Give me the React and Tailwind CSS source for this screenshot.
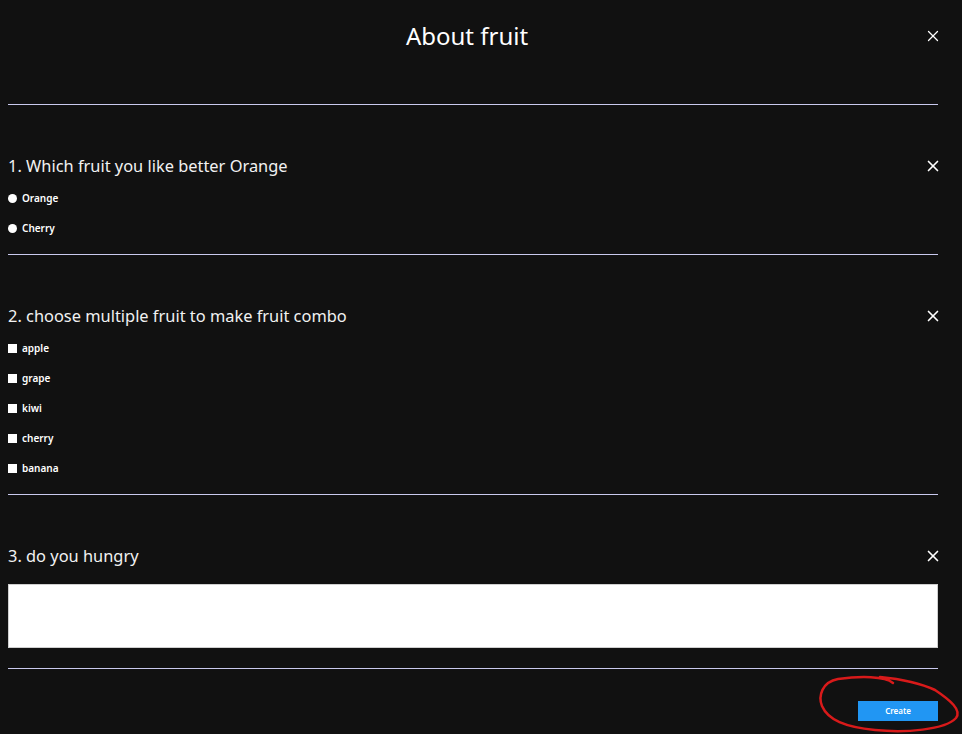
import React, { useState } from 'react';
import { X } from 'lucide-react';

const questions = [
  {
    id: 1,
    title: '1. Which fruit you like better Orange',
    type: 'radio',
    options: ['Orange', 'Cherry'],
  },
  {
    id: 2,
    title: '2. choose multiple fruit to make fruit combo',
    type: 'checkbox',
    options: ['apple', 'grape', 'kiwi', 'cherry', 'banana'],
  },
  {
    id: 3,
    title: '3. do you hungry',
    type: 'text',
  },
];

const Question = ({ question }) => {
  const [answer, setAnswer] = useState('');

  return (
    <div className="pt-[49px] pb-[20px] border-b border-[#c9c9ee]">
      {/* Question Header */}
      <div className="flex items-center justify-between h-6">
        <h3 className="text-[16.4px] text-[#f2f2f2] leading-6">{question.title}</h3>
        <button className="mr-[-4px] text-white">
          <X size={18} strokeWidth={2.2} />
        </button>
      </div>

      {question.type === 'text' ? (
        <input
          type="text"
          value={answer}
          onChange={(e) => setAnswer(e.target.value)}
          className="mt-4 w-full h-16 bg-white border border-[#cfcfcf] outline-none px-2 text-black"
        />
      ) : (
        <div className="mt-[5px] mb-[-9px]">
          {question.options.map((option) => (
            <label key={option} className="flex items-center h-[30px] text-[10px] font-semibold text-white">
              {question.type === 'radio' ? (
                <span className="w-[9px] h-[9px] rounded-full bg-white mr-[5px]" />
              ) : (
                <span className="w-[9px] h-[9px] bg-white mr-[5px]" />
              )}
              {option}
            </label>
          ))}
        </div>
      )}
    </div>
  );
};

const App = () => {
  return (
    <div
      className="relative min-h-screen bg-[#111111] pl-2 pr-6"
      style={{ fontFamily: '"Noto Sans", "Open Sans", sans-serif' }}
    >
      {/* Header */}
      <div className="relative pt-[20px] pb-[52px] border-b border-[#c9c9ee]">
        <h1 className="text-center text-[24px] leading-8 text-white pr-3">About fruit</h1>
        <button className="absolute right-[-4px] top-[27px] text-white">
          <X size={18} strokeWidth={1.7} />
        </button>
      </div>

      {questions.map((q) => (
        <Question key={q.id} question={q} />
      ))}

      {/* Footer */}
      <div className="flex justify-end pt-[32px] pb-[12px]">
        <button className="w-[80px] h-[20px] bg-[#2196f3] text-white text-[8px] font-semibold">
          Create
        </button>
      </div>

      {/* hand drawn annotation */}
      <svg className="absolute inset-0 w-full h-full pointer-events-none" viewBox="0 0 962 734" preserveAspectRatio="none">
        <path
          d="M 893 683 C 885 676, 860 676, 838 679 C 822 682, 818 696, 822 706 C 828 720, 845 727, 875 730 C 905 733, 945 730, 956 718 C 962 710, 950 700, 935 690 C 920 683, 900 679, 880 677"
          fill="none"
          stroke="#d81a1a"
          strokeWidth="2.5"
          strokeLinecap="round"
        />
      </svg>
    </div>
  );
};

export default App;
